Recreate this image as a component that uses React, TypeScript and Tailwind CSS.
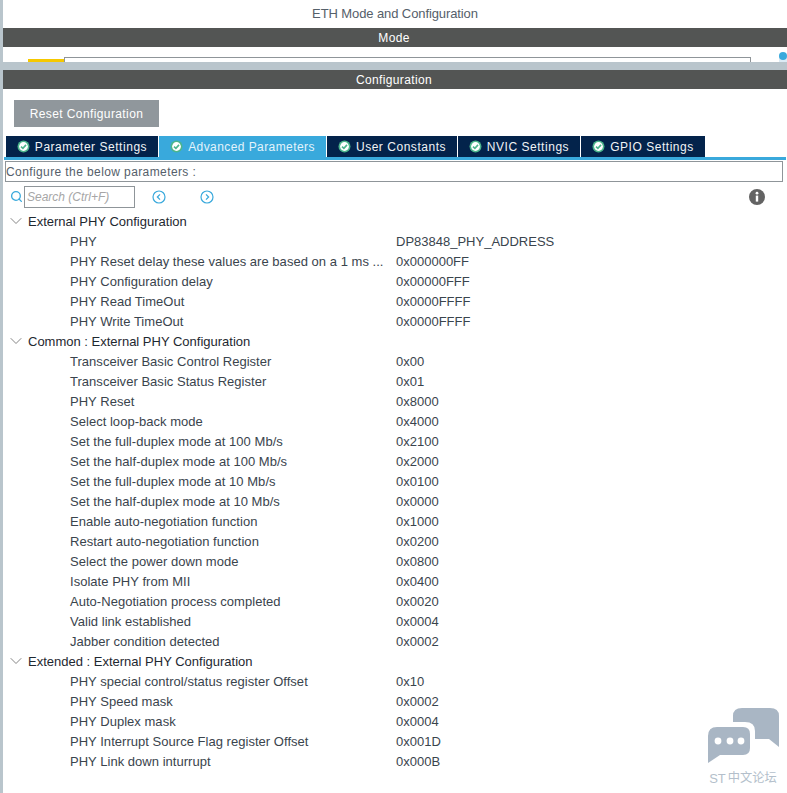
import { ChevronDown, Search } from 'lucide-react'

const groups = [
  {
    title: 'External PHY Configuration',
    rows: [
      ['PHY', 'DP83848_PHY_ADDRESS'],
      ['PHY Reset delay these values are based on a 1 ms ...', '0x000000FF'],
      ['PHY Configuration delay', '0x00000FFF'],
      ['PHY Read TimeOut', '0x0000FFFF'],
      ['PHY Write TimeOut', '0x0000FFFF'],
    ],
  },
  {
    title: 'Common : External PHY Configuration',
    rows: [
      ['Transceiver Basic Control Register', '0x00'],
      ['Transceiver Basic Status Register', '0x01'],
      ['PHY Reset', '0x8000'],
      ['Select loop-back mode', '0x4000'],
      ['Set the full-duplex mode at 100 Mb/s', '0x2100'],
      ['Set the half-duplex mode at 100 Mb/s', '0x2000'],
      ['Set the full-duplex mode at 10 Mb/s', '0x0100'],
      ['Set the half-duplex mode at 10 Mb/s', '0x0000'],
      ['Enable auto-negotiation function', '0x1000'],
      ['Restart auto-negotiation function', '0x0200'],
      ['Select the power down mode', '0x0800'],
      ['Isolate PHY from MII', '0x0400'],
      ['Auto-Negotiation process completed', '0x0020'],
      ['Valid link established', '0x0004'],
      ['Jabber condition detected', '0x0002'],
    ],
  },
  {
    title: 'Extended : External PHY Configuration',
    rows: [
      ['PHY special control/status register Offset', '0x10'],
      ['PHY Speed mask', '0x0002'],
      ['PHY Duplex mask', '0x0004'],
      ['PHY Interrupt Source Flag register Offset', '0x001D'],
      ['PHY Link down inturrupt', '0x000B'],
    ],
  },
]

const tabs = [
  { label: 'Parameter Settings', width: 'w-[152px]', active: false },
  { label: 'Advanced Parameters', width: 'w-[167px]', active: true },
  { label: 'User Constants', width: 'w-[130px]', active: false },
  { label: 'NVIC Settings', width: 'w-[122px]', active: false },
  { label: 'GPIO Settings', width: 'w-[124px]', active: false },
]

const CheckBadge = () => (
  <svg width="13" height="13" viewBox="0 0 13 13" className="shrink-0">
    <circle cx="6.5" cy="6.5" r="6" fill="#4cb58c" />
    <circle cx="6.5" cy="6.5" r="4.4" fill="#ffffff" />
    <path d="M4 6.6 L5.9 8.4 L9 4.9" fill="none" stroke="#4cb58c" strokeWidth="1.6" />
  </svg>
)

const NavArrow = ({ dir }: { dir: 'left' | 'right' }) => (
  <svg width="14" height="14" viewBox="0 0 14 14">
    <circle cx="7" cy="7" r="6" fill="none" stroke="#39a9dc" strokeWidth="1.2" />
    <path
      d={dir === 'left' ? 'M8 4.4 L5.4 7 L8 9.6' : 'M6 4.4 L8.6 7 L6 9.6'}
      fill="none"
      stroke="#39a9dc"
      strokeWidth="1.3"
    />
  </svg>
)

const InfoIcon = () => (
  <svg width="16" height="16" viewBox="0 0 16 16">
    <circle cx="8" cy="8" r="8" fill="#636363" />
    <circle cx="8" cy="4.2" r="1.4" fill="#ffffff" />
    <rect x="6.8" y="6.6" width="2.4" height="6" fill="#ffffff" />
  </svg>
)

export default function App() {
  return (
    <div className="relative h-[793px] w-[787px] overflow-hidden bg-white pl-[3px] font-['Liberation_Sans',Arial,sans-serif] text-[12px] text-[#3a444d]">
      <div className="absolute inset-y-0 left-0 w-[3px] bg-[#b9c5cc]" />

      <div className="flex h-[28px] items-center justify-center text-[13px] tracking-[-0.1px] text-[#55606a]">
        ETH Mode and Configuration
      </div>
      <div className="flex h-[19px] items-center justify-center bg-[#535554] pr-[2px] tracking-[0.35px] text-white">
        Mode
      </div>

      <div className="relative h-[15px] bg-white">
        <div className="absolute bottom-0 left-[25px] h-[3px] w-[36px] bg-[#f5c800]" />
        <div className="absolute bottom-0 left-[61px] h-[5px] w-[687px] border-x border-t border-[#8f9599]" />
        <div className="absolute bottom-0 right-0 h-[6px] w-[8px] bg-[#dcebf5]" />
        <div className="absolute right-0 top-[5px] size-[8px] rounded-full bg-[#39a9dc]" />
      </div>

      <div className="h-[8px] bg-[#b9c5cc]" />
      <div className="flex h-[19px] items-center justify-center bg-[#535554] pr-[2px] tracking-[0.35px] text-white">
        Configuration
      </div>

      <div className="px-[11px] pt-[11px]">
        <div className="flex h-[27px] w-[145px] items-center justify-center bg-[#90979c] tracking-[0.4px] text-white">
          Reset Configuration
        </div>
      </div>

      <div className="mt-[9px] flex gap-px pl-[3px]">
        {tabs.map(tab => (
          <div
            key={tab.label}
            className={`flex h-[21px] items-center justify-center gap-[5px] ${tab.width} ${
              tab.active
                ? 'bg-[#39a9dc] tracking-[0.42px] text-[#e3f3fb]'
                : 'bg-[#03234b] tracking-[0.53px] text-[#f0f3f6]'
            }`}
          >
            <CheckBadge />
            {tab.label}
          </div>
        ))}
      </div>
      <div className="ml-px mr-px h-[3px] bg-[#39a9dc]" />

      <div className="ml-[2px] mr-[4px] mt-px flex h-[21px] items-center border border-[#8f9599] tracking-[0.4px] text-[#55606a]">
        Configure the below parameters :
      </div>

      <div className="flex h-[29px] items-center pl-[7px] pr-[22px]">
        <Search size={13} className="text-[#39a9dc]" strokeWidth={2.4} />
        <div className="ml-[1px] flex h-[22px] w-[111px] items-center border border-[#8f9599] pl-[2px] italic text-[#a6a6a6]">
          Search (Ctrl+F)
        </div>
        <div className="ml-[17px]">
          <NavArrow dir="left" />
        </div>
        <div className="ml-[34px]">
          <NavArrow dir="right" />
        </div>
        <div className="ml-auto">
          <InfoIcon />
        </div>
      </div>

      <div className="flex flex-col text-[13px]">
        {groups.map(group => (
          <div key={group.title}>
            <div className="flex h-[20px] items-center pl-[3px] text-[#1e2830]">
              <ChevronDown size={20} strokeWidth={1.1} className="mr-[2px] text-[#7a7a7a]" />
              <span className="pt-[2px]">{group.title}</span>
            </div>
            {group.rows.map(([name, value]) => (
              <div key={name} className="flex h-[20px] items-center pl-[67px] pt-[2px]">
                <div className="w-[326px] shrink-0 whitespace-nowrap tracking-[0.03px]">{name}</div>
                <div>{value}</div>
              </div>
            ))}
          </div>
        ))}
      </div>

      {/* forum watermark in the corner */}
      <div className="absolute bottom-[5px] right-[8px] flex w-[72px] flex-col items-center">
        <svg width="72" height="56" viewBox="0 0 72 56">
          <path
            d="M26 9 Q26 1 35 1 L63 1 Q72 1 72 9 L72 40 L62 32 L48 32 L48 24 Q48 15 38 15 L26 15 Z"
            fill="#a9b6c4"
          />
          <path
            d="M10 20 L36 20 Q43 20 43 27 L43 41 Q43 48 36 48 L13 48 L1 56 L1 29 Q1 20 10 20 Z"
            fill="#a9b6c4"
          />
          <circle cx="11" cy="34" r="3.4" fill="#ffffff" />
          <circle cx="23" cy="34" r="3.4" fill="#ffffff" />
          <circle cx="34" cy="34" r="3.4" fill="#ffffff" />
        </svg>
        <div className="mt-[6px] flex items-center gap-[2px] whitespace-nowrap font-['Liberation_Sans','Noto_Sans_CJK_SC',sans-serif] text-[12.25px] text-[#b4bfcb]">
          <span className="text-[13px]">ST</span>
          <span>中文论坛</span>
        </div>
      </div>
    </div>
  )
}
